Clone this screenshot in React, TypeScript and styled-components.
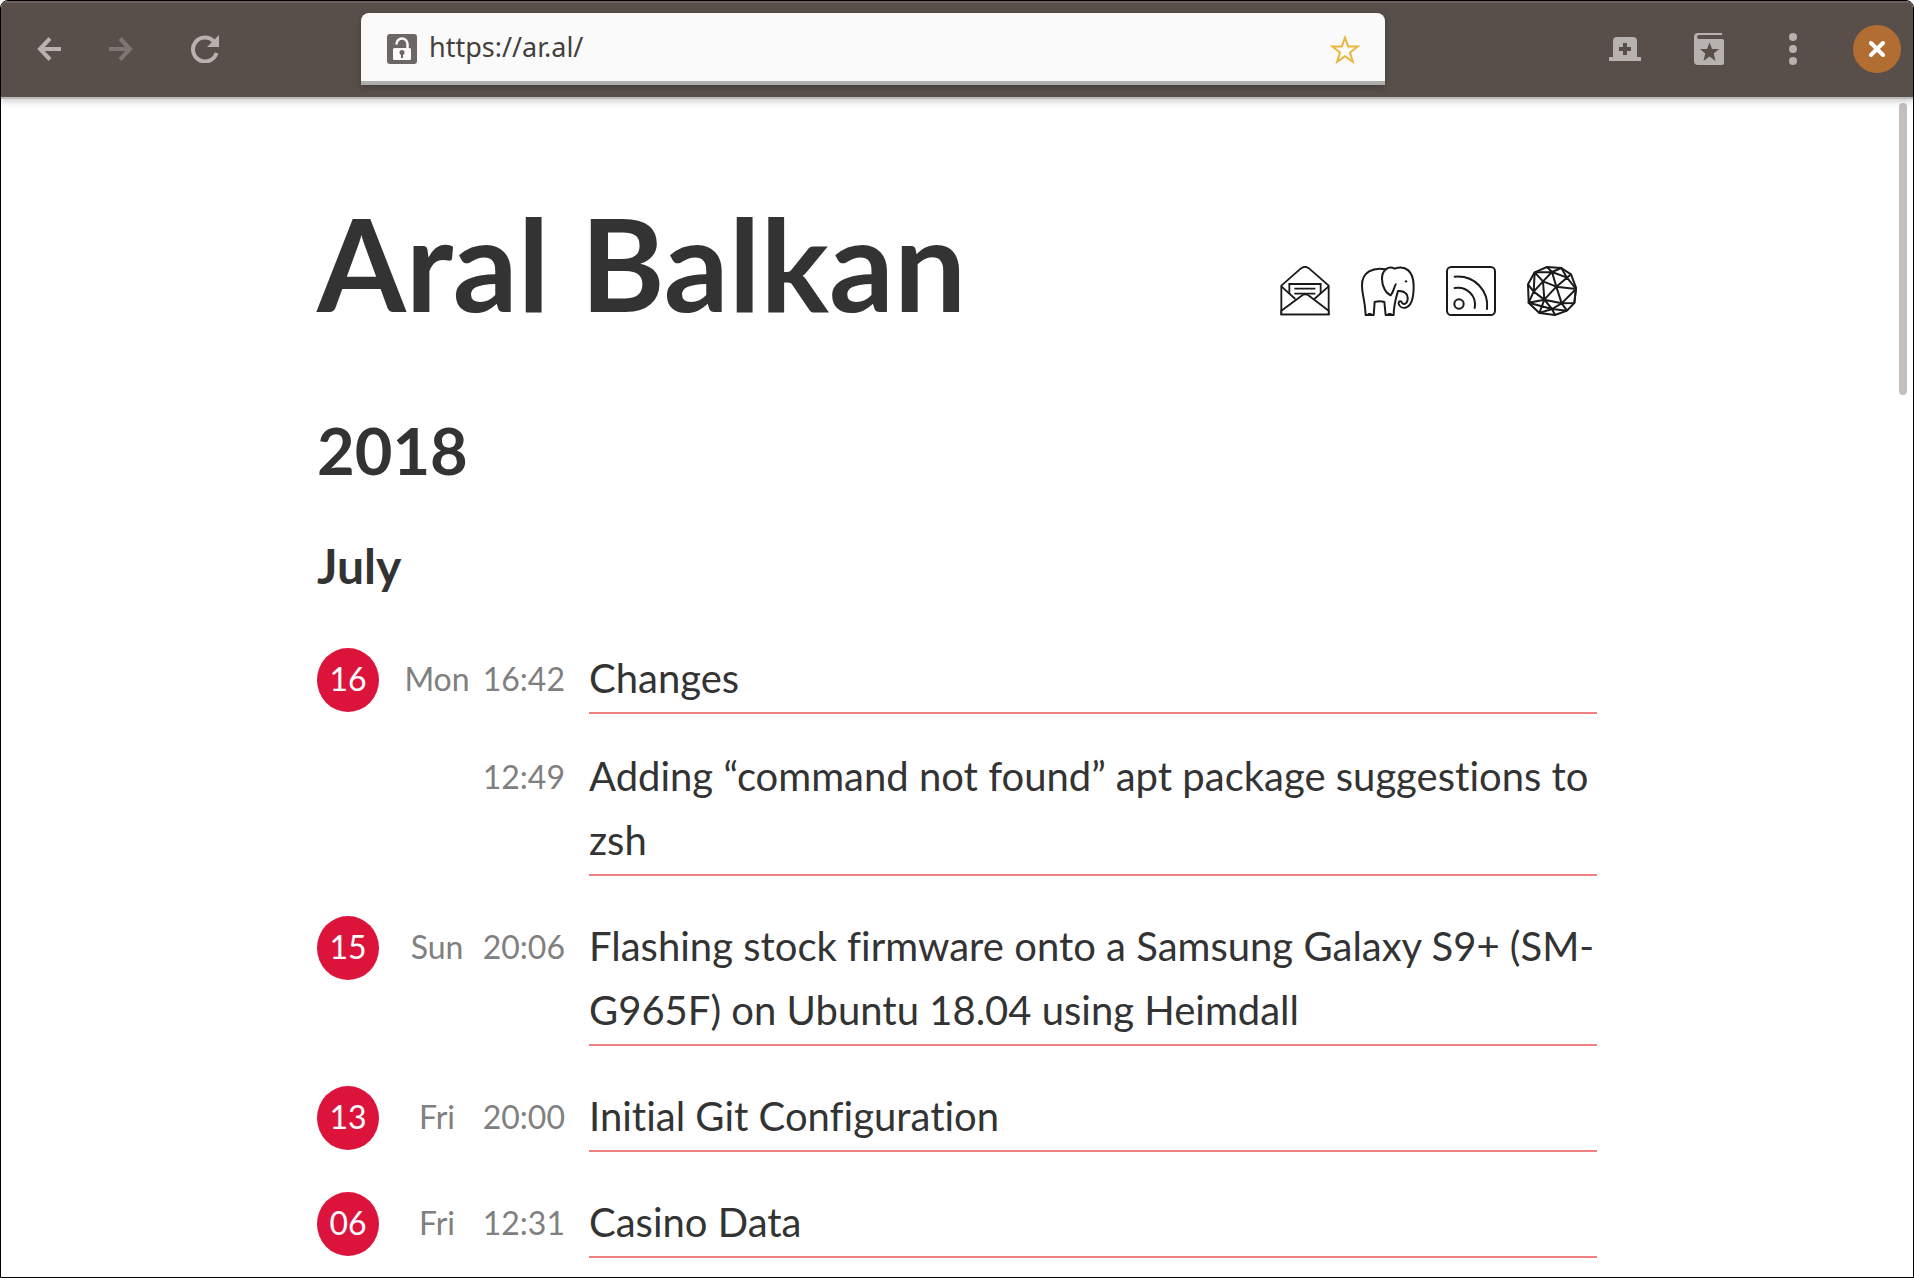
import React from "react";
import styled, { createGlobalStyle } from "styled-components";

const GlobalStyle = createGlobalStyle`
  *, *::before, *::after { box-sizing: border-box; }
  body { margin: 0; background: #fff; }
`;

const BrowserWindow = styled.div`
  position: relative;
  display: flex;
  flex-direction: column;
  height: 100vh;
  overflow: hidden;
  border: 1px solid #000;
  border-radius: 8px 8px 0 0;
  background: #fff;
  color: #333;
  font-family: Lato, "Open Sans", sans-serif;
  font-variant-ligatures: none;
`;

const Toolbar = styled.header`
  display: flex;
  flex: none;
  align-items: center;
  height: 96px;
  background: #584f4a;
  box-shadow: inset 0 2px #6c5f60, 0 2px #bdbbba, 0 3px 7px 1px rgba(0, 0, 0, 0.22);
  z-index: 1;
`;

const Navigation = styled.nav`
  display: flex;
  flex: 0 0 360px;
  align-items: center;
  gap: 24px;
  padding-left: 24px;
`;

const ToolButton = styled.button<{ $push?: number; $dim?: boolean }>`
  display: flex;
  align-items: center;
  justify-content: center;
  width: 48px;
  height: 48px;
  margin: 0 0 0 ${(p) => p.$push ?? 0}px;
  padding: 0;
  border: 0;
  background: none;
  color: ${(p) => (p.$dim ? "#7d7672" : "#b7b2af")};
`;

const AddressBar = styled.form`
  display: flex;
  flex: 0 1 1024px;
  align-items: center;
  height: 72px;
  padding: 0 16px 0 26px;
  border-radius: 8px 8px 0 0;
  background: #fafafa;
  box-shadow: inset 0 -4px #adafad, 0 2px 6px rgba(0, 0, 0, 0.25);
`;

const AddressInput = styled.input`
  flex: 1;
  min-width: 0;
  margin: 0;
  padding: 0 0 4px 12px;
  border: 0;
  outline: 0;
  background: transparent;
  color: #45403b;
  font: 27px/36px "Noto Sans", "Open Sans", sans-serif;
`;

const StarButton = styled(ToolButton)`
  color: #e9b63b;
`;

const Tools = styled.div`
  display: flex;
  align-items: center;
  gap: 36px;
  margin-left: auto;
  padding-right: 12px;
`;

const CloseButton = styled(ToolButton)`
  border-radius: 50%;
  background: #b26d32;
  color: #fff;
`;

const ScrollThumb = styled.div`
  position: absolute;
  top: 102px;
  right: 6px;
  width: 8px;
  height: 292px;
  border-radius: 4px;
  background: #c4c0bd;
`;

const Page = styled.main`
  flex: 1;
  min-height: 0;
  overflow: hidden;
  padding: 88px 24px 0;
`;

const Content = styled.div`
  max-width: 1280px;
  margin: 0 auto;
`;

const Masthead = styled.div`
  display: flex;
  align-items: flex-end;
  justify-content: space-between;
`;

const SiteTitle = styled.h1`
  margin: 0;
  font-size: 128px;
  font-weight: 700;
  line-height: 156px;
`;

const SocialLinks = styled.nav`
  display: flex;
  gap: 31px;
  padding: 0 20px 25px 0;
`;

const SocialLink = styled.a`
  display: block;
  height: 50px;
  color: #1a1a1a;
  svg { display: block; }
`;

const YearHeading = styled.h2`
  margin: 70px 0 0;
  font-size: 65px;
  font-weight: 700;
  line-height: 78px;
`;

const MonthHeading = styled.h3`
  margin: 48px 0 53px;
  font-size: 48px;
  font-weight: 700;
  line-height: 58px;
`;

const DayList = styled.ol`
  display: flex;
  flex-direction: column;
  gap: 40px;
  margin: 0;
  padding: 0;
  list-style: none;
`;

const DayRow = styled.li`
  display: flex;
  align-items: flex-start;
  font-size: 32px;
  line-height: 62px;
`;

const DayBadge = styled.span`
  flex: 0 0 62px;
  height: 64px;
  border-radius: 50%;
  background: #dc143c;
  color: #fff;
  text-align: center;
`;

const Weekday = styled.span`
  flex: 0 0 116px;
  margin-right: -16px;
  color: #808080;
  text-align: center;
`;

const Entries = styled.ul`
  display: flex;
  flex: 1;
  flex-direction: column;
  gap: 30px;
  margin: -2px 0 0;
  padding: 0;
  list-style: none;
`;

const Entry = styled.li`
  display: flex;
  align-items: flex-start;
  gap: 24px;
`;

const EntryTime = styled.time`
  flex: 0 0 86px;
  color: #808080;
  line-height: 66px;
  text-align: right;
`;

const EntryLink = styled.a`
  flex: 1;
  padding-bottom: 2px;
  border-bottom: 2px solid #f08080;
  color: #333;
  font-size: 40px;
  line-height: 64px;
  text-decoration: none;
`;

const BackIcon = () => (
  <svg width="24" height="24" viewBox="0 0 24 24" fill="none" stroke="currentColor" strokeWidth="4">
    <path d="M13 1.5 3 12l10 10.500M3 12h21" />
  </svg>
);

const ForwardIcon = () => (
  <svg width="24" height="24" viewBox="0 0 24 24" fill="none" stroke="currentColor" strokeWidth="4">
    <path d="M11 1.500 21 12 11 22.500M21 12H0" />
  </svg>
);

const ReloadIcon = () => (
  <svg width="28" height="28" viewBox="0 0 28 28" fill="none" stroke="currentColor" strokeWidth="4">
    <path d="M23 6.500A12 12 0 1 0 25.500 18" />
    <path d="M28 0v12H16z" fill="currentColor" stroke="none" />
  </svg>
);

const LockIcon = () => (
  <svg width="30" height="30" viewBox="0 0 30 30">
    <rect width="30" height="30" rx="3" fill="#6c6764" />
    <path d="M9.500 10.500V10a5.500 5.500 0 0 1 11 0v5" fill="none" stroke="#fafafa" strokeWidth="2.500" />
    <rect x="6" y="14" width="18" height="12" rx="1.500" fill="#fafafa" />
    <circle cx="15" cy="18.500" r="2.500" fill="#6c6764" />
    <path d="M14 19h2v5h-2z" fill="#6c6764" />
  </svg>
);

const StarIcon = () => (
  <svg width="32" height="32" viewBox="0 0 32 32" fill="none" stroke="currentColor" strokeWidth="2">
    <path d="M16 4.500 19.100 13.500H28.600L21 19.500 23.800 28.700 16 23.200 8.200 28.700 11 19.500 3.400 13.500H12.900Z" />
  </svg>
);

const NewTabIcon = () => (
  <svg width="32" height="24" viewBox="0 0 32 24">
    <path fill="currentColor" fillRule="evenodd" d="M4 20V4a4 4 0 0 1 4-4h16a4 4 0 0 1 4 4v16h4v4H0v-4zM14 6v4h-4v4h4v4h4v-4h4v-4h-4V6z" />
  </svg>
);

const BookmarksIcon = () => (
  <svg width="30" height="32" viewBox="0 0 30 32">
    <path fill="currentColor" d="M28 0v2H5a2 2 0 0 0 0 4h23a2 2 0 0 1 2 2v22a2 2 0 0 1-2 2H4a4 4 0 0 1-4-4V4a4 4 0 0 1 4-4z" />
    <path fill="#584f4a" d="M15.500 9.500l2.600 6.500h7l-5.400 4.500 1.900 7.500-6.100-4.500-6.100 4.500 1.900-7.500L6 16h7z" />
  </svg>
);

const MenuIcon = () => (
  <svg width="8" height="32" viewBox="0 0 8 32" fill="currentColor">
    <circle cx="4" cy="4" r="4" />
    <circle cx="4" cy="16" r="4" />
    <circle cx="4" cy="28" r="4" />
  </svg>
);

const CloseIcon = () => (
  <svg width="16" height="16" viewBox="0 0 16 16" fill="none" stroke="currentColor" strokeWidth="4" strokeLinecap="round">
    <path d="M2 2l12 12M14 2L2 14" />
  </svg>
);

const EnvelopeIcon = () => (
  <svg width="50" height="50" viewBox="62 47 150 150" fill="none" stroke="currentColor" strokeWidth="5.500">
    <path d="M66 106 124 55Q137 44 150 55L208 106V192H66Z" />
    <path d="M90 131V101H184V131M105 115H168M105 130H168" />
    <path fill="#fff" d="M66 181 126 137Q137 127 150 137L208 181V192H66Z" />
    <path d="M66 108 108 146M208 108 165 146" />
  </svg>
);

const ElephantIcon = () => (
  <svg width="54" height="50" viewBox="304 47 162 150" fill="none" stroke="currentColor" strokeWidth="6" strokeLinecap="round" strokeLinejoin="round">
    <path d="M378 57C340 50 307 65 307 105C307 137 316 145 318 194H342L345 155Q360 151 374 155L378 194H402C402 168 407 148 415 122C440 121 447 137 443 151C440 163 428 164 426 155C422 150 416 154 417 160C420 170 429 174 437 172C457 168 462 140 462 108C462 62 438 44 405 55C387 46 367 57 367 86C367 110 380 130 393 135C401 126 402 114 408 102" />
    <path d="M326 190H334M386 190H394" strokeWidth="4" />
    <circle cx="439" cy="93" r="3.500" fill="currentColor" stroke="none" />
  </svg>
);

const FeedIcon = () => (
  <svg width="50" height="50" viewBox="558 47 150 150" fill="none" stroke="currentColor" strokeWidth="6" strokeLinecap="round">
    <rect x="561" y="50" width="144" height="144" rx="13" />
    <circle cx="597" cy="161" r="14" />
    <path d="M584 79C645 74 687 122 681 176M584 113C621 107 651 137 644 173" />
  </svg>
);

const SphereIcon = () => (
  <svg width="50" height="50" viewBox="798 47 150 150" fill="none" stroke="currentColor" strokeWidth="6" strokeLinejoin="round">
    <path d="M858 50 901 53 930 72 945 112 940 158 918 181 882 194 835 188 803 157 801 102 821 66Z" />
    <path d="M821 66 873 65 858 50M873 65 901 53 918 82 873 65 886 109 918 82 930 72M918 82 945 116 886 109 846 93 873 65M821 66 846 93 818 124 801 102M821 66 818 124 850 148 846 93M850 148 886 109 902 159 850 148M902 159 945 116 940 158 902 159 918 181M818 124 803 157 850 148 835 188M850 148 873 176 902 159M803 157 873 176 835 188M873 176 882 194M873 176 918 181" />
  </svg>
);

const socialLinks = [
  { label: "Email", href: "#email", Icon: EnvelopeIcon },
  { label: "Mastodon", href: "#mastodon", Icon: ElephantIcon },
  { label: "RSS feed", href: "#feed", Icon: FeedIcon },
  { label: "Web", href: "#web", Icon: SphereIcon },
];

const days = [
  {
    date: "16",
    weekday: "Mon",
    entries: [
      { time: "16:42", title: "Changes" },
      { time: "12:49", title: "Adding “command not found” apt package suggestions to zsh" },
    ],
  },
  {
    date: "15",
    weekday: "Sun",
    entries: [
      { time: "20:06", title: "Flashing stock firmware onto a Samsung Galaxy S9+ (SM-G965F) on Ubuntu 18.04 using Heimdall" },
    ],
  },
  { date: "13", weekday: "Fri", entries: [{ time: "20:00", title: "Initial Git Configuration" }] },
  { date: "06", weekday: "Fri", entries: [{ time: "12:31", title: "Casino Data" }] },
];

export default function App() {
  return (
    <>
      <GlobalStyle />
      <BrowserWindow>
        <Toolbar>
          <Navigation aria-label="History">
            <ToolButton aria-label="Back"><BackIcon /></ToolButton>
            <ToolButton aria-label="Forward" $dim><ForwardIcon /></ToolButton>
            <ToolButton aria-label="Reload" $push={12}><ReloadIcon /></ToolButton>
          </Navigation>
          <AddressBar onSubmit={(e) => e.preventDefault()}>
            <LockIcon />
            <AddressInput aria-label="Address" defaultValue="https://ar.al/" spellCheck={false} />
            <StarButton type="button" aria-label="Bookmark this page"><StarIcon /></StarButton>
          </AddressBar>
          <Tools>
            <ToolButton aria-label="New tab"><NewTabIcon /></ToolButton>
            <ToolButton aria-label="Bookmarks"><BookmarksIcon /></ToolButton>
            <ToolButton aria-label="Menu"><MenuIcon /></ToolButton>
            <CloseButton aria-label="Close"><CloseIcon /></CloseButton>
          </Tools>
        </Toolbar>
        <Page>
          <Content>
            <Masthead>
              <SiteTitle>Aral Balkan</SiteTitle>
              <SocialLinks aria-label="Elsewhere">
                {socialLinks.map(({ label, href, Icon }) => (
                  <SocialLink key={label} href={href} aria-label={label}><Icon /></SocialLink>
                ))}
              </SocialLinks>
            </Masthead>
            <YearHeading>2018</YearHeading>
            <MonthHeading>July</MonthHeading>
            <DayList>
              {days.map((day) => (
                <DayRow key={day.date}>
                  <DayBadge>{day.date}</DayBadge>
                  <Weekday>{day.weekday}</Weekday>
                  <Entries>
                    {day.entries.map((entry) => (
                      <Entry key={entry.time}>
                        <EntryTime>{entry.time}</EntryTime>
                        <EntryLink href="#post">{entry.title}</EntryLink>
                      </Entry>
                    ))}
                  </Entries>
                </DayRow>
              ))}
            </DayList>
          </Content>
        </Page>
        <ScrollThumb />
      </BrowserWindow>
    </>
  );
}
